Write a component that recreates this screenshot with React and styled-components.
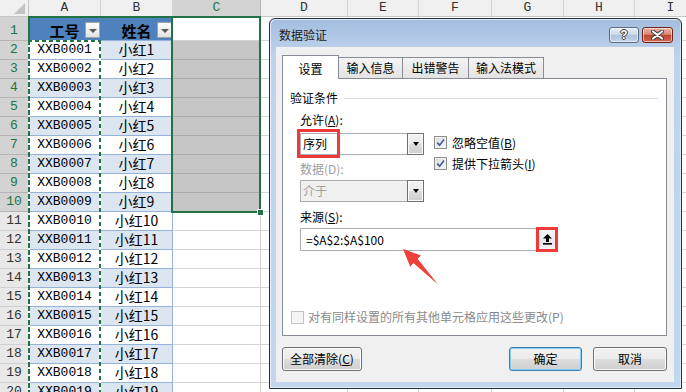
import React from 'react';
import styled, { createGlobalStyle } from 'styled-components';

const GlobalStyle = createGlobalStyle`
  html, body { margin: 0; padding: 0; background: #fff; }
  body { width: 686px; height: 392px; overflow: hidden; }
  *, *::before, *::after { box-sizing: border-box; }
`;

const Page = styled.div`
  position: relative;
  width: 686px;
  height: 392px;
  overflow: hidden;
`;

/* ---------- spreadsheet ---------- */
const Sheet = styled.div`
  position: relative;
  display: grid;
  grid-template-columns: 29px 72px 72px 88px 87px 71px 73px 72px 71px 72px;
  grid-template-rows: 17px 24px repeat(19, 19px);
  width: 707px;
  font-family: "Liberation Mono", "Noto Sans CJK SC", monospace;
  color: #000;
`;

const Corner = styled.div`
  background: #f0f0f0;
  border-right: 1px solid #c6c6c6;
  border-bottom: 1px solid #c6c6c6;
  display: flex;
  align-items: flex-end;
  justify-content: flex-end;
  padding: 0 2px 1px 0;
`;

const ColHead = styled.div`
  display: flex;
  align-items: center;
  justify-content: center;
  background: ${p => (p.$sel ? '#d3d3d3' : '#f0f0f0')};
  color: ${p => (p.$sel ? '#217346' : '#333')};
  border-right: 1px solid ${p => (p.$sel ? '#b4b4b4' : '#d4d4d4')};
  border-bottom: 1px solid #c6c6c6;
  font-size: 13px;
  line-height: 16px;
`;

const RowHead = styled.div`
  display: flex;
  align-items: flex-end;
  justify-content: center;
  padding-bottom: 1px;
  background: ${p => (p.$sel ? '#d3d3d3' : '#e8e8e8')};
  color: ${p => (p.$sel ? '#217346' : '#333')};
  border-right: 1px solid #b8b8b8;
  border-bottom: 1px solid ${p => (p.$sel ? '#b4b4b4' : '#d0d0d0')};
  font-size: 13px;
  line-height: 16px;
`;

const Cell = styled.div`
  display: flex;
  align-items: flex-end;
  justify-content: center;
  padding-bottom: 1px;
  background: ${p => p.$bg || '#fff'};
  border-right: 1px solid ${p => p.$rc || '#d4d4d4'};
  border-bottom: 1px solid ${p => p.$bc || '#d4d4d4'};
  font-family: ${p => (p.$cjk ? '"Noto Sans CJK SC", sans-serif' : 'inherit')};
  font-size: ${p => (p.$cjk ? '14px' : '13px')};
  line-height: 17px;
  white-space: nowrap;
`;

const HeadCell = styled.div`
  position: relative;
  display: flex;
  align-items: center;
  justify-content: center;
  padding-top: 4px;
  background: #4f81bd;
  border-right: 1px solid #4f81bd;
  border-bottom: 1px solid #95b3d7;
  font-family: "Noto Sans CJK SC", sans-serif;
  font-weight: 700;
  font-size: 15px;
  line-height: 18px;
  color: #000;
`;

const FilterBtn = styled.span`
  position: absolute;
  right: 0;
  bottom: 2px;
  width: 15px;
  height: 16px;
  border: 1px solid #a3a3a3;
  background: linear-gradient(#ffffff, #e2e2e2);
  display: flex;
  align-items: center;
  justify-content: center;
  &::after {
    content: '';
    border-left: 4px solid transparent;
    border-right: 4px solid transparent;
    border-top: 4px solid #5a5a5a;
    margin-top: 1px;
  }
`;

const Marquee = styled.div`
  position: absolute;
  left: 28px;
  top: 40px;
  width: 73px;
  height: 400px;
  pointer-events: none;
  background:
    repeating-linear-gradient(180deg, #217346 0 5px, #fff 5px 7px) left top / 2px 100% no-repeat,
    repeating-linear-gradient(180deg, #217346 0 4px, #fff 4px 7px) right top / 2px 100% no-repeat,
    repeating-linear-gradient(90deg, #217346 0 4px, #fff 4px 7px) left top / 100% 2px no-repeat;
`;

const RefHead = styled.div`
  position: absolute;
  left: 28px;
  top: 16px;
  width: 145px;
  height: 25px;
  border-left: 2px solid #217346;
  border-top: 2px solid #217346;
  pointer-events: none;
`;

const Selection = styled.div`
  position: absolute;
  left: 171px;
  top: 16px;
  width: 90px;
  height: 197px;
  border: 2px solid #217346;
  pointer-events: none;
`;

const Handle = styled.span`
  position: absolute;
  right: -5px;
  bottom: -5px;
  width: 7px;
  height: 7px;
  background: #217346;
  border: 1px solid #fff;
`;

/* ---------- dialog ---------- */
const Dialog = styled.div`
  position: absolute;
  left: 269px;
  top: 18px;
  width: 413px;
  height: 371px;
  border: 1px solid #26303c;
  border-radius: 6px 6px 0 0;
  background: linear-gradient(180deg, #a2bddf 0px, #b3cae6 20px, #bed3ec 40px, #c2d7ef 100%);
  box-shadow: inset 1px 1px 0 rgba(255, 255, 255, 0.65), inset -1px -1px 0 rgba(255, 255, 255, 0.5);
  display: flex;
  flex-direction: column;
  font-family: "Noto Sans CJK SC", sans-serif;
  font-size: 12px;
  line-height: 16px;
  color: #000;
`;

const TitleBar = styled.div`
  flex: none;
  height: 28px;
  display: flex;
  align-items: center;
  padding: 4px 8px 0 9px;
`;

const Title = styled.div`
  flex: 1;
  color: #1b1b1b;
`;

const CapBtn = styled.div`
  width: ${p => p.$w}px;
  height: 16px;
  margin-left: 3px;
  border: 1px solid ${p => (p.$close ? '#6e231a' : '#5c6c80')};
  border-radius: 3px;
  background: ${p =>
    p.$close
      ? 'linear-gradient(#eab0a4 0%, #dc8a78 45%, #c5452f 52%, #d0664f 100%)'
      : 'linear-gradient(#e8eff8 0%, #cddbeb 45%, #acc2dc 52%, #c4d5e9 100%)'};
  box-shadow: inset 0 0 0 1px rgba(255, 255, 255, 0.55);
  display: flex;
  align-items: center;
  justify-content: center;
  font-family: "Liberation Sans", sans-serif;
  font-weight: 700;
  font-size: 12px;
  line-height: 14px;
  color: #fff;
  text-shadow: 1px 0 0 #3a3a3a, -1px 0 0 #3a3a3a, 0 1px 0 #3a3a3a, 0 -1px 0 #3a3a3a;
`;

const Body = styled.div`
  margin: 0 7px 0 6px;
  height: 335px;
  background: #f0f0f0;
  padding: 8px 7px 0 6px;
  display: flex;
  flex-direction: column;
`;

const Tabs = styled.div`
  display: flex;
  align-items: flex-end;
  height: 23px;
  position: relative;
  z-index: 1;
`;

const Tab = styled.div`
  width: ${p => p.$w}px;
  height: ${p => (p.$active ? 24 : 21)}px;
  margin-bottom: ${p => (p.$active ? -1 : 0)}px;
  margin-left: ${p => (p.$first ? 0 : -1)}px;
  padding-top: ${p => (p.$active ? 2 : 0)}px;
  border: 1px solid #898c95;
  border-bottom: none;
  background: ${p => (p.$active ? '#fff' : 'linear-gradient(#f4f4f4, #e3e3e3)')};
  display: flex;
  align-items: center;
  justify-content: center;
`;

const Panel = styled.div`
  height: 258px;
  background: #fff;
  border: 1px solid #898c95;
  display: flex;
  flex-direction: column;
  padding: 11px 7px 10px 7px;
`;

const GroupHeader = styled.div`
  display: flex;
  align-items: center;
  height: 16px;
  &::after {
    content: '';
    flex: 1;
    height: 1px;
    margin-left: 6px;
    background: #dcdfe3;
  }
`;

const Section = styled.div`
  display: flex;
  flex-direction: column;
  padding-left: 10px;
`;

const FieldLabel = styled.div`
  height: 16px;
  margin-top: ${p => p.$mt}px;
  color: ${p => (p.$disabled ? '#a0a0a0' : '#000')};
`;

const Row = styled.div`
  display: flex;
  align-items: flex-start;
  margin-top: 5px;
`;

const LeftCol = styled.div`
  display: flex;
  flex-direction: column;
  width: 124px;
`;

const RightCol = styled.div`
  display: flex;
  flex-direction: column;
  margin: -1px 0 0 10px;
`;

const Select = styled.div`
  position: relative;
  display: flex;
  width: 124px;
  height: 22px;
  margin-top: ${p => p.$mt || 0}px;
`;

const SelectField = styled.div`
  flex: 1;
  border: 1px solid #abadb3;
  border-right: none;
  background: ${p => (p.$disabled ? '#f0f0f0' : '#fff')};
  color: ${p => (p.$disabled ? '#a0a0a0' : '#000')};
  padding-left: 2px;
  display: flex;
  align-items: center;
`;

const DropBtn = styled.div`
  width: 17px;
  border: 1px solid #707070;
  background: linear-gradient(#f2f2f2 0%, #ebebeb 50%, #dddddd 51%, #cfcfcf 100%);
  box-shadow: inset 0 0 0 1px #fcfcfc;
  display: flex;
  align-items: center;
  justify-content: center;
  &::after {
    content: '';
    border-left: 3.5px solid transparent;
    border-right: 3.5px solid transparent;
    border-top: 4px solid #000;
  }
`;

const RedFrame = styled.span`
  position: absolute;
  left: -3px;
  top: -4px;
  width: 43px;
  height: 29px;
  border: 3px solid #f03a3a;
  pointer-events: none;
`;

const CheckRow = styled.div`
  display: flex;
  align-items: center;
  height: ${p => p.$h || 21}px;
  gap: ${p => p.$gap || 5}px;
  color: ${p => (p.$disabled ? '#8a8a8a' : '#000')};
  white-space: nowrap;
`;

const Box = styled.span`
  flex: none;
  width: 13px;
  height: 13px;
  border: 1px solid ${p => (p.$disabled ? '#c2c2c2' : '#8e8f8f')};
  background: ${p => (p.$disabled ? '#f4f4f4' : 'linear-gradient(135deg, #d9d9d9, #fdfdfd)')};
  box-shadow: inset 0 0 0 1px ${p => (p.$disabled ? '#f7f7f7' : '#f0f0f0')};
  display: flex;
  align-items: center;
  justify-content: center;
`;

const SourceBox = styled.div`
  margin-top: 3px;
  width: 258px;
  height: 23px;
  border: 1px solid #abadb3;
  background: #fff;
  display: flex;
  align-items: center;
  padding-left: 5px;
`;

const SourceText = styled.span`
  flex: 1;
`;

const PickBtn = styled.div`
  position: relative;
  width: 18px;
  height: 21px;
  margin-right: 1px;
  background: linear-gradient(#f7f7f7 0%, #e8e8e8 70%, #f3f3f3 100%);
  border: 1px solid #d0d0d0;
  display: flex;
  align-items: center;
  justify-content: center;
  &::after {
    content: '';
    position: absolute;
    left: -3px;
    top: -3px;
    right: -3px;
    bottom: -3px;
    border: 3px solid #f03a3a;
  }
`;

const ApplyRow = styled.div`
  margin-top: auto;
  padding-left: 1px;
`;

const Footer = styled.div`
  display: flex;
  margin-top: 11px;
  height: 24px;
  gap: 11px;
`;

const Btn = styled.button`
  width: ${p => p.$w}px;
  height: 24px;
  padding: 0;
  margin-right: ${p => (p.$push ? 'auto' : '0')};
  border: 1px solid ${p => (p.$default ? '#3c7fb1' : '#707070')};
  border-radius: 3px;
  background: linear-gradient(#f2f2f2 0%, #ebebeb 50%, #dddddd 51%, #cfcfcf 100%);
  box-shadow: inset 0 0 0 1px ${p => (p.$default ? '#7fd0f4' : '#fcfcfc')};
  font: inherit;
  color: #000;
`;

const Annotation = styled.svg`
  position: absolute;
  left: 396px;
  top: 242px;
  width: 46px;
  height: 46px;
  pointer-events: none;
`;

const COLS = ['A', 'B', 'C', 'D', 'E', 'F', 'G', 'H', 'I'];
const BLUE = '#dce6f1';
const LINE = '#95b3d7';

function renderSheet() {
  const out = [];
  out.push(
    <Corner key="corner">
      <svg width="12" height="12" viewBox="0 0 12 12">
        <polygon points="11,0 11,11 0,11" fill="#c4c4c4" />
      </svg>
    </Corner>
  );
  COLS.forEach(c => out.push(<ColHead key={'h' + c} $sel={c === 'C'}>{c}</ColHead>));
  for (let n = 1; n <= 20; n++) {
    out.push(<RowHead key={'r' + n} $sel={n <= 10}>{n}</RowHead>);
    if (n === 1) {
      out.push(<HeadCell key="a1">工号<FilterBtn /></HeadCell>);
      out.push(<HeadCell key="b1">姓名<FilterBtn /></HeadCell>);
      out.push(<Cell key="c1" />);
    } else {
      const idx = n - 1;
      const band = n % 2 === 0;
      const aBg = band && n !== 2 ? BLUE : '#fff';
      const bBg = band ? BLUE : '#fff';
      out.push(<Cell key={'a' + n} $bg={aBg} $bc={LINE}>{'XXB' + String(idx).padStart(4, '0')}</Cell>);
      out.push(<Cell key={'b' + n} $cjk $bg={bBg} $bc={LINE} $rc={LINE}>{'小红' + idx}</Cell>);
      if (n <= 10) out.push(<Cell key={'c' + n} $bg="#c6c6c6" $bc="#a9a9a9" />);
      else out.push(<Cell key={'c' + n} />);
    }
    ['D', 'E', 'F', 'G', 'H', 'I'].forEach(c => out.push(<Cell key={c + n} />));
  }
  return out;
}

export default function App() {
  return (
    <>
      <GlobalStyle />
      <Page>
        <Sheet>
          {renderSheet()}
          <RefHead />
          <Marquee />
          <Selection>
            <Handle />
          </Selection>
        </Sheet>

        <Dialog>
          <TitleBar>
            <Title>数据验证</Title>
            <CapBtn $w={30}>?</CapBtn>
            <CapBtn $w={31} $close>
              <svg width="13" height="10" viewBox="0 0 13 10">
                <path d="M2 1.5 L11 8.5 M11 1.5 L2 8.5" stroke="#3a3a3a" strokeWidth="4" strokeLinecap="round" />
                <path d="M2 1.5 L11 8.5 M11 1.5 L2 8.5" stroke="#ffffff" strokeWidth="2.2" strokeLinecap="round" />
              </svg>
            </CapBtn>
          </TitleBar>
          <Body>
            <Tabs>
              <Tab $active $first $w={57}>设置</Tab>
              <Tab $w={65}>输入信息</Tab>
              <Tab $w={67}>出错警告</Tab>
              <Tab $w={76}>输入法模式</Tab>
            </Tabs>
            <Panel>
              <GroupHeader>验证条件</GroupHeader>
              <Section>
                <FieldLabel $mt={6}>允许(<u>A</u>):</FieldLabel>
                <Row>
                  <LeftCol>
                    <Select>
                      <SelectField>序列</SelectField>
                      <DropBtn />
                      <RedFrame />
                    </Select>
                    <FieldLabel $mt={6} $disabled>数据(D):</FieldLabel>
                    <Select $mt={3}>
                      <SelectField $disabled>介于</SelectField>
                      <DropBtn />
                    </Select>
                  </LeftCol>
                  <RightCol>
                    <CheckRow>
                      <Box>
                        <svg width="9" height="9" viewBox="0 0 9 9">
                          <path d="M1.2 4.6 L3.6 7.2 L8 1.4" fill="none" stroke="#4a5f9c" strokeWidth="1.7" />
                        </svg>
                      </Box>
                      <span>忽略空值(<u>B</u>)</span>
                    </CheckRow>
                    <CheckRow>
                      <Box>
                        <svg width="9" height="9" viewBox="0 0 9 9">
                          <path d="M1.2 4.6 L3.6 7.2 L8 1.4" fill="none" stroke="#4a5f9c" strokeWidth="1.7" />
                        </svg>
                      </Box>
                      <span>提供下拉箭头(<u>I</u>)</span>
                    </CheckRow>
                  </RightCol>
                </Row>
                <FieldLabel $mt={7}>来源(<u>S</u>):</FieldLabel>
                <SourceBox>
                  <SourceText>=$A$2:$A$100</SourceText>
                  <PickBtn>
                    <svg width="9" height="11" viewBox="0 0 9 11">
                      <polygon points="4.5,0 9,4.6 6,4.6 6,8 3,8 3,4.6 0,4.6" fill="#000" />
                      <rect x="0" y="9" width="9" height="1.6" fill="#000" />
                    </svg>
                  </PickBtn>
                </SourceBox>
              </Section>
              <ApplyRow>
                <CheckRow $disabled $h={16} $gap={4}>
                  <Box $disabled />
                  <span>对有同样设置的所有其他单元格应用这些更改(P)</span>
                </CheckRow>
              </ApplyRow>
            </Panel>
            <Footer>
              <Btn $w={80} $push>全部清除(<u>C</u>)</Btn>
              <Btn $w={73} $default>确定</Btn>
              <Btn $w={74}>取消</Btn>
            </Footer>
          </Body>
        </Dialog>

        <Annotation viewBox="396 242 46 46">
          <polygon
            points="403,249 421,255.5 417.6,258.8 438,284.5 413.4,263 410.2,266.8"
            fill="#f0403c"
          />
        </Annotation>
      </Page>
    </>
  );
}
